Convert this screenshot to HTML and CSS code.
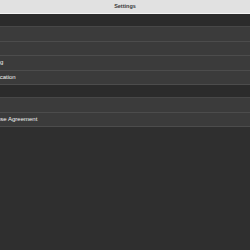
FILE: index.html
```html
<!DOCTYPE html>
<html lang="en">
<head>
    <meta charset="UTF-8">
    <meta name="viewport" content="width=device-width, initial-scale=1.0">
    <title>Settings</title>
    <link rel="stylesheet" href="styles.css">
</head>
<body>
    <div class="navbar">Settings</div>
    <div class="group-gap"></div>
    <ul class="group">
        <li class="row"></li>
        <li class="row"></li>
        <li class="row">Rating</li>
        <li class="row">Notification</li>
    </ul>
    <div class="group-gap"></div>
    <ul class="group">
        <li class="row"></li>
        <li class="row">License Agreement</li>
    </ul>
</body>
</html>
```

FILE: styles.css
```css
html, body { margin: 0; padding: 0; }
body { background: #2f2f2f; font-family: "Liberation Sans", Arial, sans-serif; width: 250px; height: 250px; overflow: hidden; -webkit-font-smoothing: antialiased; }
.navbar { height: 13px; line-height: 13px; background: #e1e1e1; border-bottom: 1px solid #f4f4f4; color: #3a3a3a; font-size: 5.5px; font-weight: bold; text-align: center; }
.group-gap { height: 12px; background: #2b2b2b; }
.group { list-style: none; margin: 0; padding: 0; border-top: 1px solid #474747; }
.row { height: 13.5px; line-height: 13.5px; background: #3b3b3b; border-bottom: 1px solid #4c4c4c; color: #f2f2f2; font-size: 6px; white-space: nowrap; text-indent: -14px; }
```
